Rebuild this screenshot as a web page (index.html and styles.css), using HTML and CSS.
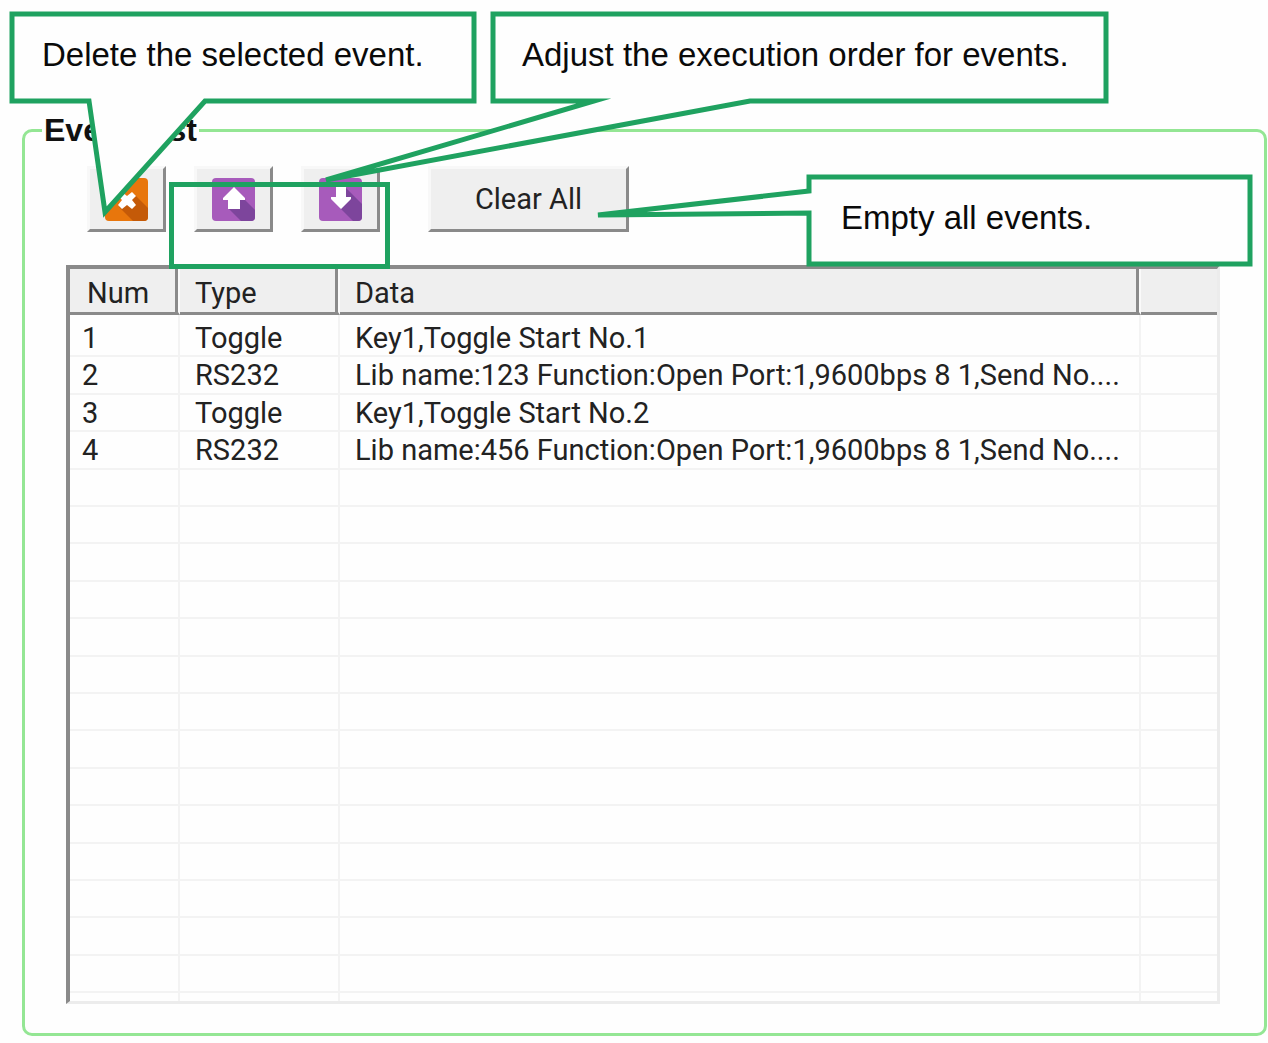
FILE: index.html
```html
<!DOCTYPE html>
<html lang="en">
<head>
<meta charset="utf-8">
<title>Event List</title>
<link rel="stylesheet" href="styles.css">
</head>
<body>
<main class="page">
  <fieldset class="panel">
    <legend class="panel-title">Event List</legend>
    <div class="toolbar">
      <button class="btn btn-icon" type="button" aria-label="Delete event">
        <svg class="icon" viewBox="0 0 43 43">
          <rect width="43" height="43" rx="4" fill="#e8760c"/>
          <path d="M29 16L43 30V39Q43 43 39 43H28L14 29Z" fill="#c45a08"/>
          <path d="M17 14L22 18L27 14L31 18L27 22L31 27L27 31L22 27L17 31L13 27L17 22L13 18Z" fill="#fff"/>
        </svg>
      </button>
      <button class="btn btn-icon" type="button" aria-label="Move up">
        <svg class="icon" viewBox="0 0 43 43">
          <rect width="43" height="43" rx="4" fill="#a75bbb"/>
          <path d="M32 21L43 32V39Q43 43 39 43H29L16 30L22 12Z" fill="#7d459c"/>
          <path d="M22 9L33 20V22H28V31H16V22H11V20Z" fill="#fff"/>
        </svg>
      </button>
      <button class="btn btn-icon" type="button" aria-label="Move down">
        <svg class="icon" viewBox="0 0 43 43">
          <rect width="43" height="43" rx="4" fill="#a75bbb"/>
          <path d="M27 10L43 26V39Q43 43 39 43H34L21 30L17 12Z" fill="#7d459c"/>
          <path d="M22 31L32 21V19H27V9H17V19H12V21Z" fill="#fff"/>
        </svg>
      </button>
      <button class="btn btn-clear" type="button">Clear All</button>
    </div>
    <div class="list">
      <table class="events">
        <colgroup><col class="col-num"><col class="col-type"><col><col class="col-end"></colgroup>
        <thead>
          <tr><th scope="col">Num</th><th scope="col">Type</th><th scope="col">Data</th><td></td></tr>
        </thead>
        <tbody>
          <tr class="first"><td>1</td><td>Toggle</td><td>Key1,Toggle Start No.1</td><td></td></tr>
          <tr><td>2</td><td>RS232</td><td>Lib name:123 Function:Open Port:1,9600bps 8 1,Send No....</td><td></td></tr>
          <tr><td>3</td><td>Toggle</td><td>Key1,Toggle Start No.2</td><td></td></tr>
          <tr><td>4</td><td>RS232</td><td>Lib name:456 Function:Open Port:1,9600bps 8 1,Send No....</td><td></td></tr>
          <tr><td></td><td></td><td></td><td></td></tr>
          <tr><td></td><td></td><td></td><td></td></tr>
          <tr><td></td><td></td><td></td><td></td></tr>
          <tr><td></td><td></td><td></td><td></td></tr>
          <tr><td></td><td></td><td></td><td></td></tr>
          <tr><td></td><td></td><td></td><td></td></tr>
          <tr><td></td><td></td><td></td><td></td></tr>
          <tr><td></td><td></td><td></td><td></td></tr>
          <tr><td></td><td></td><td></td><td></td></tr>
          <tr><td></td><td></td><td></td><td></td></tr>
          <tr><td></td><td></td><td></td><td></td></tr>
          <tr><td></td><td></td><td></td><td></td></tr>
          <tr><td></td><td></td><td></td><td></td></tr>
          <tr><td></td><td></td><td></td><td></td></tr>
          <tr class="last"><td></td><td></td><td></td><td></td></tr>
        </tbody>
      </table>
    </div>
  </fieldset>

  <div class="highlight"></div>
  <div class="callout callout-delete">
    <svg class="outline" width="466" height="91"><path d="M2 2H464V89H195L95 200L79 89H2Z"/></svg>
    <p class="note">Delete the selected event.</p>
  </div>
  <div class="callout callout-order">
    <svg class="outline" width="618" height="91"><path d="M3 2H616V89H260L-164 168L104 89H3Z"/></svg>
    <p class="note">Adjust the execution order for events.</p>
  </div>
  <div class="callout callout-empty">
    <svg class="outline" width="446" height="91"><path d="M3 2H444V89H3V38L-208 40L3 16Z"/></svg>
    <p class="note">Empty all events.</p>
  </div>
</main>
</body>
</html>
```
FILE: styles.css
```css
* { box-sizing: border-box; }

body {
  margin: 0;
  background: #fefefe;
  color: #222;
  font-family: Roboto, "Liberation Sans", sans-serif;
  font-size: 29px;
}

.page {
  position: relative;
  padding: 112px 1px 7px 22px;
}

.panel {
  margin: 0;
  min-width: 0;
  padding: 18px 44px 29px 41px;
  border: 3px solid #94e694;
  border-radius: 10px;
}

.panel-title {
  margin-left: -24px;
  padding: 0 2px;
  color: #111;
  font-family: "Liberation Sans", Arial, sans-serif;
  font-size: 32px;
  font-weight: bold;
  line-height: 36px;
}

.toolbar {
  display: flex;
  gap: 28px;
  margin: 0 0 33px 21px;
}

.btn {
  height: 66px;
  padding: 0;
  border: 3px solid #8a8a8a;
  border-top-color: #f8f8f8;
  border-left-color: #f8f8f8;
  background: #efefef;
  color: #222;
  font: inherit;
}

.btn-icon {
  display: flex;
  align-items: center;
  justify-content: center;
  width: 79px;
}

.icon {
  width: 43px;
  height: 43px;
}

.btn-clear {
  width: 201px;
  margin-left: 20px;
}

.list {
  border-top: 4px solid #8a8a8a;
  border-left: 4px solid #8a8a8a;
  border-right: 3px solid #ececec;
  border-bottom: 3px solid #ececec;
}

.events {
  width: 100%;
  table-layout: fixed;
  border-collapse: separate;
  border-spacing: 0;
}

.col-num { width: 110px; }
.col-type { width: 160px; }
.col-end { width: 76px; }

.events th,
.events td {
  height: 37px;
  padding: 0 0 0 15px;
  overflow: hidden;
  line-height: 34px;
  text-align: left;
  white-space: nowrap;
  border-right: 2px solid #f3f3f3;
  border-bottom: 2px solid #f3f3f3;
}

.events td:first-child { padding-left: 12px; }
.events th:first-child { padding-left: 17px; }
.events td:last-child { border-right: 0; }

.events thead th,
.events thead td {
  height: 46px;
  padding-top: 4px;
  background: #efefef;
  font-weight: normal;
  border-bottom: 3px solid #8a8a8a;
}

.events thead th {
  border-right: 2px solid #fafafa;
  box-shadow: inset -3px 0 #8a8a8a;
}

.events tbody tr:nth-child(5n+2) td,
.events tbody tr:nth-child(5n+4) td { height: 38px; }

.events .first td {
  height: 42px;
  padding-top: 6px;
}

.events tbody tr.last:last-child td {
  height: 8px;
  border-bottom: 0;
}

.highlight {
  position: absolute;
  left: 169px;
  top: 182px;
  width: 221px;
  height: 87px;
  border: 5px solid #1fa260;
}

.callout {
  position: absolute;
  height: 91px;
  padding: 0 32px;
}

.callout-delete { left: 10px; top: 12px; width: 466px; }
.callout-order { left: 490px; top: 12px; width: 618px; }
.callout-empty { left: 806px; top: 175px; width: 446px; padding: 0 35px; }

.outline {
  position: absolute;
  left: 0;
  top: 0;
  overflow: visible;
  fill: #fefefe;
  stroke: #1fa260;
  stroke-width: 5;
  stroke-miterlimit: 8;
}

.note {
  position: relative;
  margin: 0;
  color: #0a0a0a;
  font-family: "Liberation Sans", Arial, sans-serif;
  font-size: 33px;
  line-height: 86px;
  white-space: nowrap;
}
```
